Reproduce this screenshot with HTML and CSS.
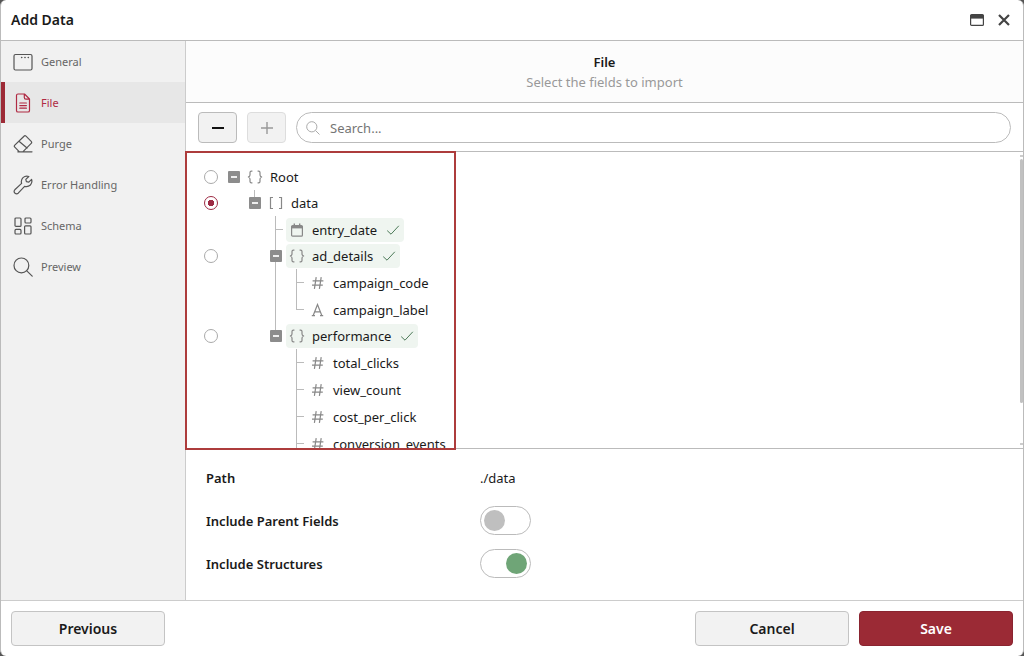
FILE: index.html
```html
<!DOCTYPE html>
<html lang="en">
<head>
  <meta charset="UTF-8">
  <meta name="viewport" content="width=device-width, initial-scale=1.0">
  <title>Add Data</title>
  <link rel="stylesheet" href="styles.css">
</head>
<body>
  <!-- Shared icons -->
  <svg class="sprite" aria-hidden="true">
    <symbol id="icon-object" viewBox="0 0 16 14">
      <path d="M5.4 1.2H4.4Q3 1.2 3 2.6V5Q3 6.6 1 7Q3 7.4 3 9V11.4Q3 12.8 4.4 12.8H5.4M10.6 1.2h1Q13 1.2 13 2.6V5Q13 6.6 15 7Q13 7.4 13 9V11.4Q13 12.8 11.6 12.8H10.6"/>
    </symbol>
    <symbol id="icon-array" viewBox="0 0 16 14">
      <path d="M5 1.5H2.5v11H5M11 1.5h2.5v11H11"/>
    </symbol>
    <symbol id="icon-number" viewBox="0 0 16 14">
      <path d="M6.2 1.2L4.4 12.8M11.2 1.2L9.4 12.8M2.6 4.8H13.4M2 9.2H12.8"/>
    </symbol>
    <symbol id="icon-text" viewBox="0 0 16 14">
      <path d="M3.2 12.5L7.5 1.5L11.8 12.5M4.8 8.8H10.2M1.8 12.7H5M10 12.7H13.2"/>
    </symbol>
    <symbol id="icon-date" viewBox="0 0 16 14">
      <rect x="2.6" y="2.6" width="10.8" height="10.6" rx="1"/>
      <path d="M2.6 4.2H13.4" stroke-width="2.4"/>
      <path d="M5.3 .6V3M10.7 .6V3" stroke-width="1.4"/>
    </symbol>
    <symbol id="icon-check" viewBox="0 0 14 12">
      <path d="M1.2 6.6L5 10.2L12.8 1.8"/>
    </symbol>
  </svg>

  <div class="dialog">
    <header class="dialog-header">
      <h1>Add Data</h1>
      <div class="window-actions">
        <button class="icon-button" type="button" aria-label="Maximize">
          <svg width="14" height="12" viewBox="0 0 14 12"><rect x=".6" y=".6" width="12.8" height="10.8" rx="1" fill="none" stroke="#444" stroke-width="1.2"/><path d="M.6 1H13.4V4.6H.6z" fill="#444"/></svg>
        </button>
        <button class="icon-button" type="button" aria-label="Close">
          <svg width="12" height="12" viewBox="0 0 12 12"><path d="M1 1L11 11M11 1L1 11" fill="none" stroke="#444" stroke-width="2.2"/></svg>
        </button>
      </div>
    </header>

    <div class="dialog-body">
      <nav class="sidebar">
        <a class="step" href="#general">
          <svg viewBox="0 0 20 20"><rect x="1" y="2.5" width="18" height="15.5" rx="1.5"/><path d="M8.6 5.6h.2M11.9 5.6h.2M15.2 5.6h.2" stroke-width="1.5"/></svg>
          General
        </a>
        <a class="step active" href="#file">
          <svg viewBox="0 0 20 20"><path d="M5 1H11.5L16.5 6V17.4Q16.5 19 15 19H5Q3.5 19 3.5 17.4V2.6Q3.5 1 5 1zM11.3 1.2V4.6Q11.3 6.2 12.9 6.2H16.3M6.8 10H13.4M6.8 12.6H13.4M6.8 15.2H13.4"/></svg>
          File
        </a>
        <a class="step" href="#purge">
          <svg viewBox="0 0 20 20"><path d="M6.4 17.8L1.8 13.2Q.8 12.2 1.8 11.2L11 2.2Q12 1.2 13 2.2L18.2 7.4Q19.2 8.4 18.2 9.4L9.8 17.8M6 7.2L14 14M4.8 17.8H19"/></svg>
          Purge
        </a>
        <a class="step" href="#errors">
          <svg viewBox="0 0 20 20"><path d="M15.8 1.5Q12.6.4 10 2.6Q7.6 5 8.6 8.4L1.8 14.8Q.4 16.4 1.8 18Q3.6 19.6 5.2 18.2L11.6 11.4Q15 12.3 17.4 10Q19.6 7.4 18.6 4.4L15.8 7.2L13.4 6.6L12.8 4.4z"/></svg>
          Error Handling
        </a>
        <a class="step" href="#schema">
          <svg viewBox="0 0 20 20"><rect x="2" y="2" width="6" height="8.4" rx="1"/><rect x="12" y="2" width="6" height="5" rx="1"/><rect x="2" y="13.4" width="6" height="4.6" rx="1"/><rect x="11.6" y="9.8" width="6.4" height="8.2" rx="1"/></svg>
          Schema
        </a>
        <a class="step" href="#preview">
          <svg viewBox="0 0 20 20"><circle cx="8.4" cy="8.4" r="7.4"/><path d="M13.8 13.8L19.2 19.2"/></svg>
          Preview
        </a>
      </nav>

      <main class="content">
        <div class="step-header">
          <h2>File</h2>
          <p>Select the fields to import</p>
        </div>

        <div class="toolbar">
          <button class="tool-button" type="button" aria-label="Collapse all">
            <svg width="14" height="14" viewBox="0 0 14 14"><path d="M1 7H13" stroke="#111" stroke-width="2"/></svg>
          </button>
          <button class="tool-button" type="button" aria-label="Expand all" disabled>
            <svg width="14" height="14" viewBox="0 0 14 14"><path d="M1 7H13M7 1V13" stroke="#999" stroke-width="1.4"/></svg>
          </button>
          <label class="search">
            <svg width="14" height="14" viewBox="0 0 14 14"><circle cx="5.8" cy="5.8" r="5.1"/><path d="M9.5 9.5L13.5 13.5"/></svg>
            <input type="text" placeholder="Search..." aria-label="Search">
          </label>
        </div>

        <div class="tree-area">
          <div class="tree">
            <div class="row parent">
              <span class="pick"><input type="radio" name="root" aria-label="Root"></span>
              <button class="toggle" type="button" aria-label="Collapse Root"></button>
              <span class="field"><svg class="type"><use href="#icon-object"/></svg>Root</span>
            </div>
            <div class="row parent">
              <span class="pick"><input type="radio" name="root" aria-label="data" checked></span>
              <span class="indent"></span>
              <button class="toggle joined" type="button" aria-label="Collapse data"></button>
              <span class="field"><svg class="type"><use href="#icon-array"/></svg>data</span>
            </div>
            <div class="row">
              <span class="pick"></span>
              <span class="indent"></span><span class="indent"></span><span class="indent line tick"></span>
              <span class="field selected"><svg class="type"><use href="#icon-date"/></svg>entry_date<svg class="check"><use href="#icon-check"/></svg></span>
            </div>
            <div class="row parent">
              <span class="pick"><input type="radio" name="root" aria-label="ad_details"></span>
              <span class="indent"></span><span class="indent"></span>
              <button class="toggle line" type="button" aria-label="Collapse ad_details"></button>
              <span class="field selected"><svg class="type"><use href="#icon-object"/></svg>ad_details<svg class="check"><use href="#icon-check"/></svg></span>
            </div>
            <div class="row">
              <span class="pick"></span>
              <span class="indent"></span><span class="indent"></span><span class="indent line"></span><span class="indent line tick"></span>
              <span class="field"><svg class="type"><use href="#icon-number"/></svg>campaign_code</span>
            </div>
            <div class="row">
              <span class="pick"></span>
              <span class="indent"></span><span class="indent"></span><span class="indent line"></span><span class="indent line tick last"></span>
              <span class="field"><svg class="type"><use href="#icon-text"/></svg>campaign_label</span>
            </div>
            <div class="row parent">
              <span class="pick"><input type="radio" name="root" aria-label="performance"></span>
              <span class="indent"></span><span class="indent"></span>
              <button class="toggle joined" type="button" aria-label="Collapse performance"></button>
              <span class="field selected"><svg class="type"><use href="#icon-object"/></svg>performance<svg class="check"><use href="#icon-check"/></svg></span>
            </div>
            <div class="row">
              <span class="pick"></span>
              <span class="indent"></span><span class="indent"></span><span class="indent"></span><span class="indent line tick"></span>
              <span class="field"><svg class="type"><use href="#icon-number"/></svg>total_clicks</span>
            </div>
            <div class="row">
              <span class="pick"></span>
              <span class="indent"></span><span class="indent"></span><span class="indent"></span><span class="indent line tick"></span>
              <span class="field"><svg class="type"><use href="#icon-number"/></svg>view_count</span>
            </div>
            <div class="row">
              <span class="pick"></span>
              <span class="indent"></span><span class="indent"></span><span class="indent"></span><span class="indent line tick"></span>
              <span class="field"><svg class="type"><use href="#icon-number"/></svg>cost_per_click</span>
            </div>
            <div class="row">
              <span class="pick"></span>
              <span class="indent"></span><span class="indent"></span><span class="indent"></span><span class="indent line tick"></span>
              <span class="field"><svg class="type"><use href="#icon-number"/></svg>conversion_events</span>
            </div>
          </div>
          <div class="scrollbar"><span class="cap"></span><span class="thumb"></span><span class="cap"></span></div>
        </div>

        <div class="settings">
          <div class="setting">
            <span class="setting-label">Path</span>
            <span>./data</span>
          </div>
          <div class="setting">
            <label class="setting-label" for="parent-fields">Include Parent Fields</label>
            <input class="switch" type="checkbox" id="parent-fields">
          </div>
          <div class="setting">
            <label class="setting-label" for="structures">Include Structures</label>
            <input class="switch" type="checkbox" id="structures" checked>
          </div>
        </div>
      </main>
    </div>

    <footer class="dialog-footer">
      <button class="button" type="button">Previous</button>
      <div class="footer-right">
        <button class="button" type="button">Cancel</button>
        <button class="button button-primary" type="button">Save</button>
      </div>
    </footer>
  </div>
</body>
</html>
```

FILE: styles.css
```css
* {
  box-sizing: border-box;
}
body {
  margin: 0;
  background-color: #555;
  color: #1a1a1a;
  font-family: "Noto Sans", sans-serif;
  font-size: 13px;
  line-height: 20px;
}
button, input {
  font: inherit;
  color: inherit;
  margin: 0;
  padding: 0;
}
h1, h2, p {
  margin: 0;
}
.sprite {
  display: none;
}
.dialog {
  display: flex;
  flex-direction: column;
  height: 100vh;
  background-color: #fff;
  border: solid #bbb;
  border-width: 0 1px;
  border-radius: 6px;
  overflow: hidden;
}

/* Header */
.dialog-header {
  display: flex;
  align-items: center;
  justify-content: space-between;
  padding: 10px 13px 10px 10px;
  border-bottom: 1px solid #bbb;
}
.dialog-header h1 {
  font-size: 14px;
  font-weight: 600;
}
.window-actions {
  display: flex;
  gap: 14px;
}
.icon-button {
  display: flex;
  align-items: center;
  border: none;
  background: none;
}

/* Sidebar */
.dialog-body {
  display: flex;
  flex: 1;
  min-height: 0;
}
.sidebar {
  flex: 0 0 185px;
  background-color: #f1f1f1;
  border-right: 1px solid #ccc;
}
.step {
  display: flex;
  align-items: center;
  gap: 8px;
  height: 41px;
  padding-left: 8px;
  border-left: 4px solid transparent;
  color: #666;
  font-size: 11px;
  text-decoration: none;
}
.step svg {
  width: 20px;
  height: 20px;
  fill: none;
  stroke: #555;
  stroke-width: 1.2;
  stroke-linejoin: round;
  stroke-linecap: round;
}
.step.active {
  background-color: #e7e7e7;
  border-left-color: #9d2a36;
  color: #b02a43;
}
.step.active svg {
  stroke: #b02a43;
}

/* Content */
.content {
  display: flex;
  flex-direction: column;
  flex: 1;
  min-width: 0;
}
.step-header {
  padding: 11px 0 10px;
  background-color: #fcfcfc;
  border-bottom: 1px solid #bbb;
  text-align: center;
}
.step-header h2 {
  font-size: 13px;
  font-weight: 600;
}
.step-header p {
  color: #999;
}
.toolbar {
  display: flex;
  gap: 10px;
  padding: 9px 12px 8px;
  border-bottom: 1px solid #bbb;
}
.tool-button {
  display: flex;
  align-items: center;
  justify-content: center;
  width: 39px;
  height: 31px;
  background-color: #f2f2f2;
  border: 1px solid #bbb;
  border-radius: 4px;
}
.tool-button:disabled {
  border-color: #ddd;
}
.search {
  display: flex;
  align-items: center;
  gap: 10px;
  flex: 1;
  height: 31px;
  padding: 0 9px;
  border: 1px solid #bbb;
  border-radius: 16px;
}
.search svg {
  fill: none;
  stroke: #aaa;
}
.search input {
  flex: 1;
  border: none;
  outline: none;
  background: none;
}
.search input::placeholder {
  color: #757575;
}

/* Field tree */
.tree-area {
  display: flex;
  justify-content: space-between;
  flex: 1;
  min-height: 0;
  border-bottom: 1px solid #bbb;
}
.tree {
  width: 271px;
  margin: -1px 0 -2px -1px;
  padding: 11px 0 0 17px;
  border: 2px solid #ad3c3c;
  overflow: hidden;
}
.row {
  display: flex;
  align-items: center;
  height: 27px;
  white-space: nowrap;
}
.row.parent {
  height: 26px;
}
.pick {
  display: flex;
  flex: 0 0 19px;
}
.pick input {
  appearance: none;
  width: 14px;
  height: 14px;
  border: 1px solid #aaa;
  border-radius: 50%;
}
.pick input:checked {
  border-color: #9d2a43;
  background: radial-gradient(circle, #9d2a43 3px, transparent 3px);
}
.indent, .toggle {
  flex: 0 0 21px;
  align-self: stretch;
}
.toggle {
  display: flex;
  align-items: center;
  justify-content: center;
  border: none;
  background: none;
}
.toggle::before {
  content: "";
  width: 12px;
  height: 12px;
  border-radius: 1px;
  background: linear-gradient(#eee, #eee) center / 6px 2px no-repeat #8c8c8c;
}
.line {
  background: linear-gradient(#bbb, #bbb) 10px 0 / 1px 100% no-repeat;
}
.joined {
  background: linear-gradient(#bbb, #bbb) 10px 0 / 1px 13px no-repeat;
}
.tick {
  background: linear-gradient(#bbb, #bbb) 10px 0 / 1px 100% no-repeat,
    linear-gradient(#bbb, #bbb) 10px 13px / 8px 1px no-repeat;
}
.last {
  background-size: 1px 13px, 8px 1px;
}
.field {
  display: flex;
  align-items: center;
  height: 24px;
  border-radius: 4px;
}
.type {
  width: 16px;
  height: 14px;
  margin: 0 7px 0 3px;
  fill: none;
  stroke: #888;
  stroke-width: 1.2;
}
.selected {
  padding-right: 4px;
  background-color: #eff5f0;
}
.check {
  width: 14px;
  height: 12px;
  margin-left: 9px;
  fill: none;
  stroke: #4c7a58;
}
.scrollbar {
  display: flex;
  flex-direction: column;
  justify-content: space-between;
  width: 3px;
  padding: 3px 0;
}
.cap {
  height: 2px;
  background-color: #ccc;
}
.thumb {
  flex: 0 0 84%;
  margin: 2px 0 auto;
  border-radius: 2px;
  background-color: #c1c1c1;
}

/* Settings */
.settings {
  padding: 7px 20px 15px;
}
.setting {
  display: grid;
  grid-template-columns: 274px 1fr;
  align-items: center;
  height: 43px;
}
.setting-label {
  font-weight: 600;
}
.switch {
  appearance: none;
  display: flex;
  align-items: center;
  width: 51px;
  height: 29px;
  padding: 0 3px;
  border: 1px solid #bbb;
  border-radius: 15px;
}
.switch::before {
  content: "";
  width: 21px;
  height: 21px;
  border-radius: 50%;
  background-color: #bfbfbf;
}
.switch:checked {
  justify-content: flex-end;
}
.switch:checked::before {
  background-color: #6fa577;
}

/* Footer */
.dialog-footer {
  display: flex;
  justify-content: space-between;
  padding: 10px;
  border-top: 1px solid #ccc;
}
.footer-right {
  display: flex;
  gap: 10px;
}
.button {
  width: 154px;
  height: 35px;
  background-color: #f2f2f2;
  border: 1px solid #c4c4c4;
  border-radius: 4px;
  font-size: 14px;
  font-weight: 600;
}
.button-primary {
  background-color: #9b2a35;
  border-color: #8a2430;
  color: #fff;
}
```
